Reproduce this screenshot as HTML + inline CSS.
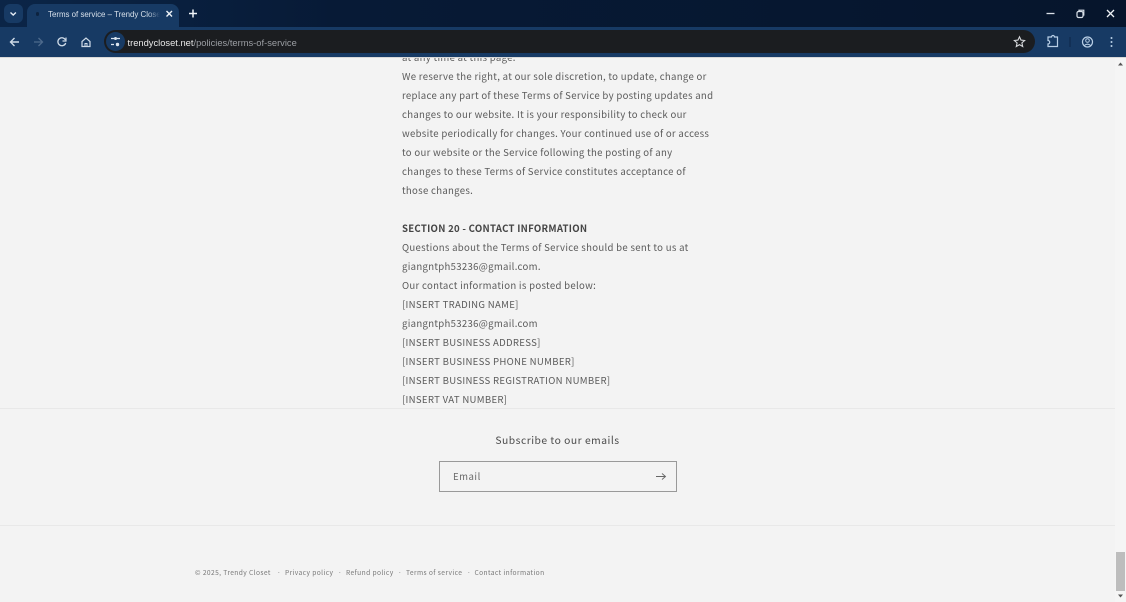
<!DOCTYPE html>
<html><head><meta charset="utf-8"><style>
html,body{margin:0;padding:0;width:1126px;height:602px;overflow:hidden;background:#f3f3f3}
body{position:relative;font-family:"Noto Sans CJK JP","Liberation Sans",sans-serif}
.a{position:absolute;white-space:nowrap}
.l{left:402px;font-size:9.6px;line-height:19px;height:19px;letter-spacing:.3px;color:#5b5b5b}
.c{font-family:"Liberation Sans",sans-serif}
.f{font-size:6.65px;line-height:12px;top:565.5px;color:#777;letter-spacing:.4px}
svg{position:absolute;overflow:visible}
#p{position:absolute;left:0;top:0;width:1126px;height:602px;filter:blur(.3px)}
</style></head><body><div id="p">
<div class="a" style="left:0;top:0;width:1126px;height:27px;background:linear-gradient(90deg,#0b2547,#071a36 30%,#06152c)"></div>
<div class="a" style="left:0;top:27px;width:1126px;height:30px;background:#173a64"></div>
<div class="a" style="left:0;top:57px;width:1126px;height:1px;background:#d8d8d8"></div>
<div class="a" style="left:4px;top:4px;width:19px;height:19px;border-radius:6px;background:#173a64"></div>
<svg style="left:0;top:0" width="30" height="27"><path d="M10.5 12.5l2.700 2.500 2.700-2.500" fill="none" stroke="#e6edf5" stroke-width="1.4"/></svg>
<div class="a" style="left:27px;top:4px;width:152px;height:23px;border-radius:8px 8px 0 0;background:#173a64"></div>
<div class="a" style="left:36px;top:12px;width:3px;height:4px;background:#0d2340;border-radius:2px"></div>
<div class="a c" style="left:48px;top:8px;width:112px;overflow:hidden;font-size:7.9px;line-height:13px;color:#d7e0ea">Terms of service – Trendy Closet</div>
<div class="a" style="left:148px;top:8px;width:12px;height:13px;background:linear-gradient(90deg,rgba(23,58,100,0),#173a64)"></div>
<svg style="left:0;top:0" width="210" height="27"><path d="M166.5 11l5.500 5.500M172 11l-5.500 5.500" stroke="#eef3f8" stroke-width="1.4" fill="none"/><path d="M193 9.500v8M189 13.500h8" stroke="#f0f4f8" stroke-width="1.500" fill="none"/></svg>
<svg style="left:0;top:0" width="1126" height="27"><path d="M1046.500 13.500h8" stroke="#d9e0e8" stroke-width="1.3"/><rect x="1077" y="11.500" width="6" height="6" rx="1.500" fill="none" stroke="#d9e0e8" stroke-width="1.2"/><path d="M1079 11v-.8h4.800v4.800h-.8" fill="none" stroke="#d9e0e8" stroke-width="1.2"/><path d="M1107 10l7 7M1114 10l-7 7" stroke="#eef2f6" stroke-width="1.3"/></svg>
<svg style="left:0;top:27px" width="110" height="30">
<path d="M19 15h-8M14.500 11l-4 4 4 4" fill="none" stroke="#cfdbe8" stroke-width="1.4"/>
<path d="M34 15h8M38.500 11l4 4-4 4" fill="none" stroke="#4d6a8c" stroke-width="1.3"/>
<path d="M65.500 13a4 4 0 1 0 .2 3" fill="none" stroke="#cfdbe8" stroke-width="1.3"/><path d="M66 10.500v3.500h-3.500" fill="none" stroke="#cfdbe8" stroke-width="1.2"/>
<path d="M82 14.500l4-3.500 4 3.500v5h-8z" fill="none" stroke="#cfdbe8" stroke-width="1.2"/><path d="M85 19.500v-3h2v3" fill="none" stroke="#cfdbe8" stroke-width="1"/>
</svg>
<div class="a" style="left:104px;top:30px;width:931px;height:23px;border-radius:12px;background:#1b1d20"></div>
<div class="a" style="left:106px;top:32px;width:19px;height:19px;border-radius:10px;background:#173a64"></div>
<svg style="left:0;top:27px" width="130" height="30"><path d="M111 11.500h3M117 11.500h3M111 17.500h3" stroke="#dbe5ef" stroke-width="1.2"/><circle cx="115.500" cy="11.500" r="1.500" fill="#dbe5ef"/><circle cx="117.500" cy="17.500" r="1.700" fill="#dbe5ef"/></svg>
<div class="a c" style="left:127.500px;top:35.500px;font-size:9.35px;line-height:14px;color:#e8e8e8">trendycloset.net<span style="color:#9b9ea3">/policies/terms-of-service</span></div>
<svg style="left:0;top:27px" width="1126" height="30">
<path d="M1019.500 9.800l1.500 3.300 3.600.4-2.700 2.400.8 3.600-3.200-1.900-3.200 1.900.8-3.600-2.700-2.400 3.600-.4z" fill="none" stroke="#d8dadd" stroke-width="1.1"/>
<path d="M1048 10h3.500a1.500 1.500 0 0 1 3 0h3v9.500h-9.500v-2.500a1.500 1.500 0 0 0 0-3.500z" fill="none" stroke="#b9cfe6" stroke-width="1.2"/>
<path d="M1070 10v10" stroke="#0f2a4c" stroke-width="1.2"/>
<circle cx="1087.500" cy="15" r="5" fill="none" stroke="#b9cfe6" stroke-width="1.2"/><circle cx="1087.500" cy="13.500" r="1.800" fill="none" stroke="#b9cfe6" stroke-width="1"/><path d="M1084.300 18.500q3.200-2.600 6.400 0" fill="none" stroke="#b9cfe6" stroke-width="1"/>
<circle cx="1111.500" cy="11" r="1" fill="#b9cfe6"/><circle cx="1111.500" cy="15" r="1" fill="#b9cfe6"/><circle cx="1111.500" cy="19" r="1" fill="#b9cfe6"/>
</svg>
<div class="a" style="left:0;top:58px;width:1115px;height:544px;overflow:hidden">
<div class="a l" style="top:-10px">at any time at this page.</div>
<div class="a l" style="top:9px">We reserve the right, at our sole discretion, to update, change or</div>
<div class="a l" style="top:28px">replace any part of these Terms of Service by posting updates and</div>
<div class="a l" style="top:47px">changes to our website. It is your responsibility to check our</div>
<div class="a l" style="top:66px">website periodically for changes. Your continued use of or access</div>
<div class="a l" style="top:85px">to our website or the Service following the posting of any</div>
<div class="a l" style="top:104px">changes to these Terms of Service constitutes acceptance of</div>
<div class="a l" style="top:123px">those changes.</div>
<div class="a l" style="top:161px;font-weight:700;color:#444;letter-spacing:.27px">SECTION 20 - CONTACT INFORMATION</div>
<div class="a l" style="top:179.500px">Questions about the Terms of Service should be sent to us at</div>
<div class="a l" style="top:198.500px">giangntph53236@gmail.com.</div>
<div class="a l" style="top:217.500px">Our contact information is posted below:</div>
<div class="a l" style="top:236.500px">[INSERT TRADING NAME]</div>
<div class="a l" style="top:255.500px">giangntph53236@gmail.com</div>
<div class="a l" style="top:274.500px">[INSERT BUSINESS ADDRESS]</div>
<div class="a l" style="top:293.500px">[INSERT BUSINESS PHONE NUMBER]</div>
<div class="a l" style="top:312.500px">[INSERT BUSINESS REGISTRATION NUMBER]</div>
<div class="a l" style="top:331.500px">[INSERT VAT NUMBER]</div>
</div>
<div class="a" style="left:0;top:408px;width:1115px;height:1px;background:#e8e8e8"></div>
<div class="a" style="left:0;top:525px;width:1115px;height:1px;background:#e8e8e8"></div>
<div class="a" style="left:0;top:431px;width:1115px;text-align:center;font-size:10.3px;line-height:18px;letter-spacing:.5px;color:#4a4a4a">Subscribe to our emails</div>
<div class="a" style="left:439px;top:461px;width:236px;height:29px;border:1px solid #999"></div>
<div class="a" style="left:453px;top:468px;font-size:9.6px;line-height:17px;letter-spacing:.5px;color:#6a6a6a">Email</div>
<svg style="left:0;top:0" width="700" height="500"><path d="M656 476.500h9.500M662 473.500l3.500 3-3.500 3" fill="none" stroke="#666" stroke-width=".9"/></svg>
<div class="a f" style="left:195px">© 2025, Trendy Closet</div>
<div class="a f" style="left:277px">·</div>
<div class="a f" style="left:285px">Privacy policy</div>
<div class="a f" style="left:338px">·</div>
<div class="a f" style="left:346px">Refund policy</div>
<div class="a f" style="left:398px">·</div>
<div class="a f" style="left:406px">Terms of service</div>
<div class="a f" style="left:467px">·</div>
<div class="a f" style="left:474.500px">Contact information</div>
<div class="a" style="left:1115px;top:58px;width:11px;height:544px;background:#f5f5f5"></div>
<div class="a" style="left:1116px;top:552px;width:9px;height:39px;background:#bdbdbd"></div>
<svg style="left:0;top:0" width="1126" height="602"><path d="M1118 65.500l2.500-3 2.500 3z" fill="#555"/><path d="M1118 594.500l2.500 3 2.500-3z" fill="#555"/></svg>
</div></body></html>
